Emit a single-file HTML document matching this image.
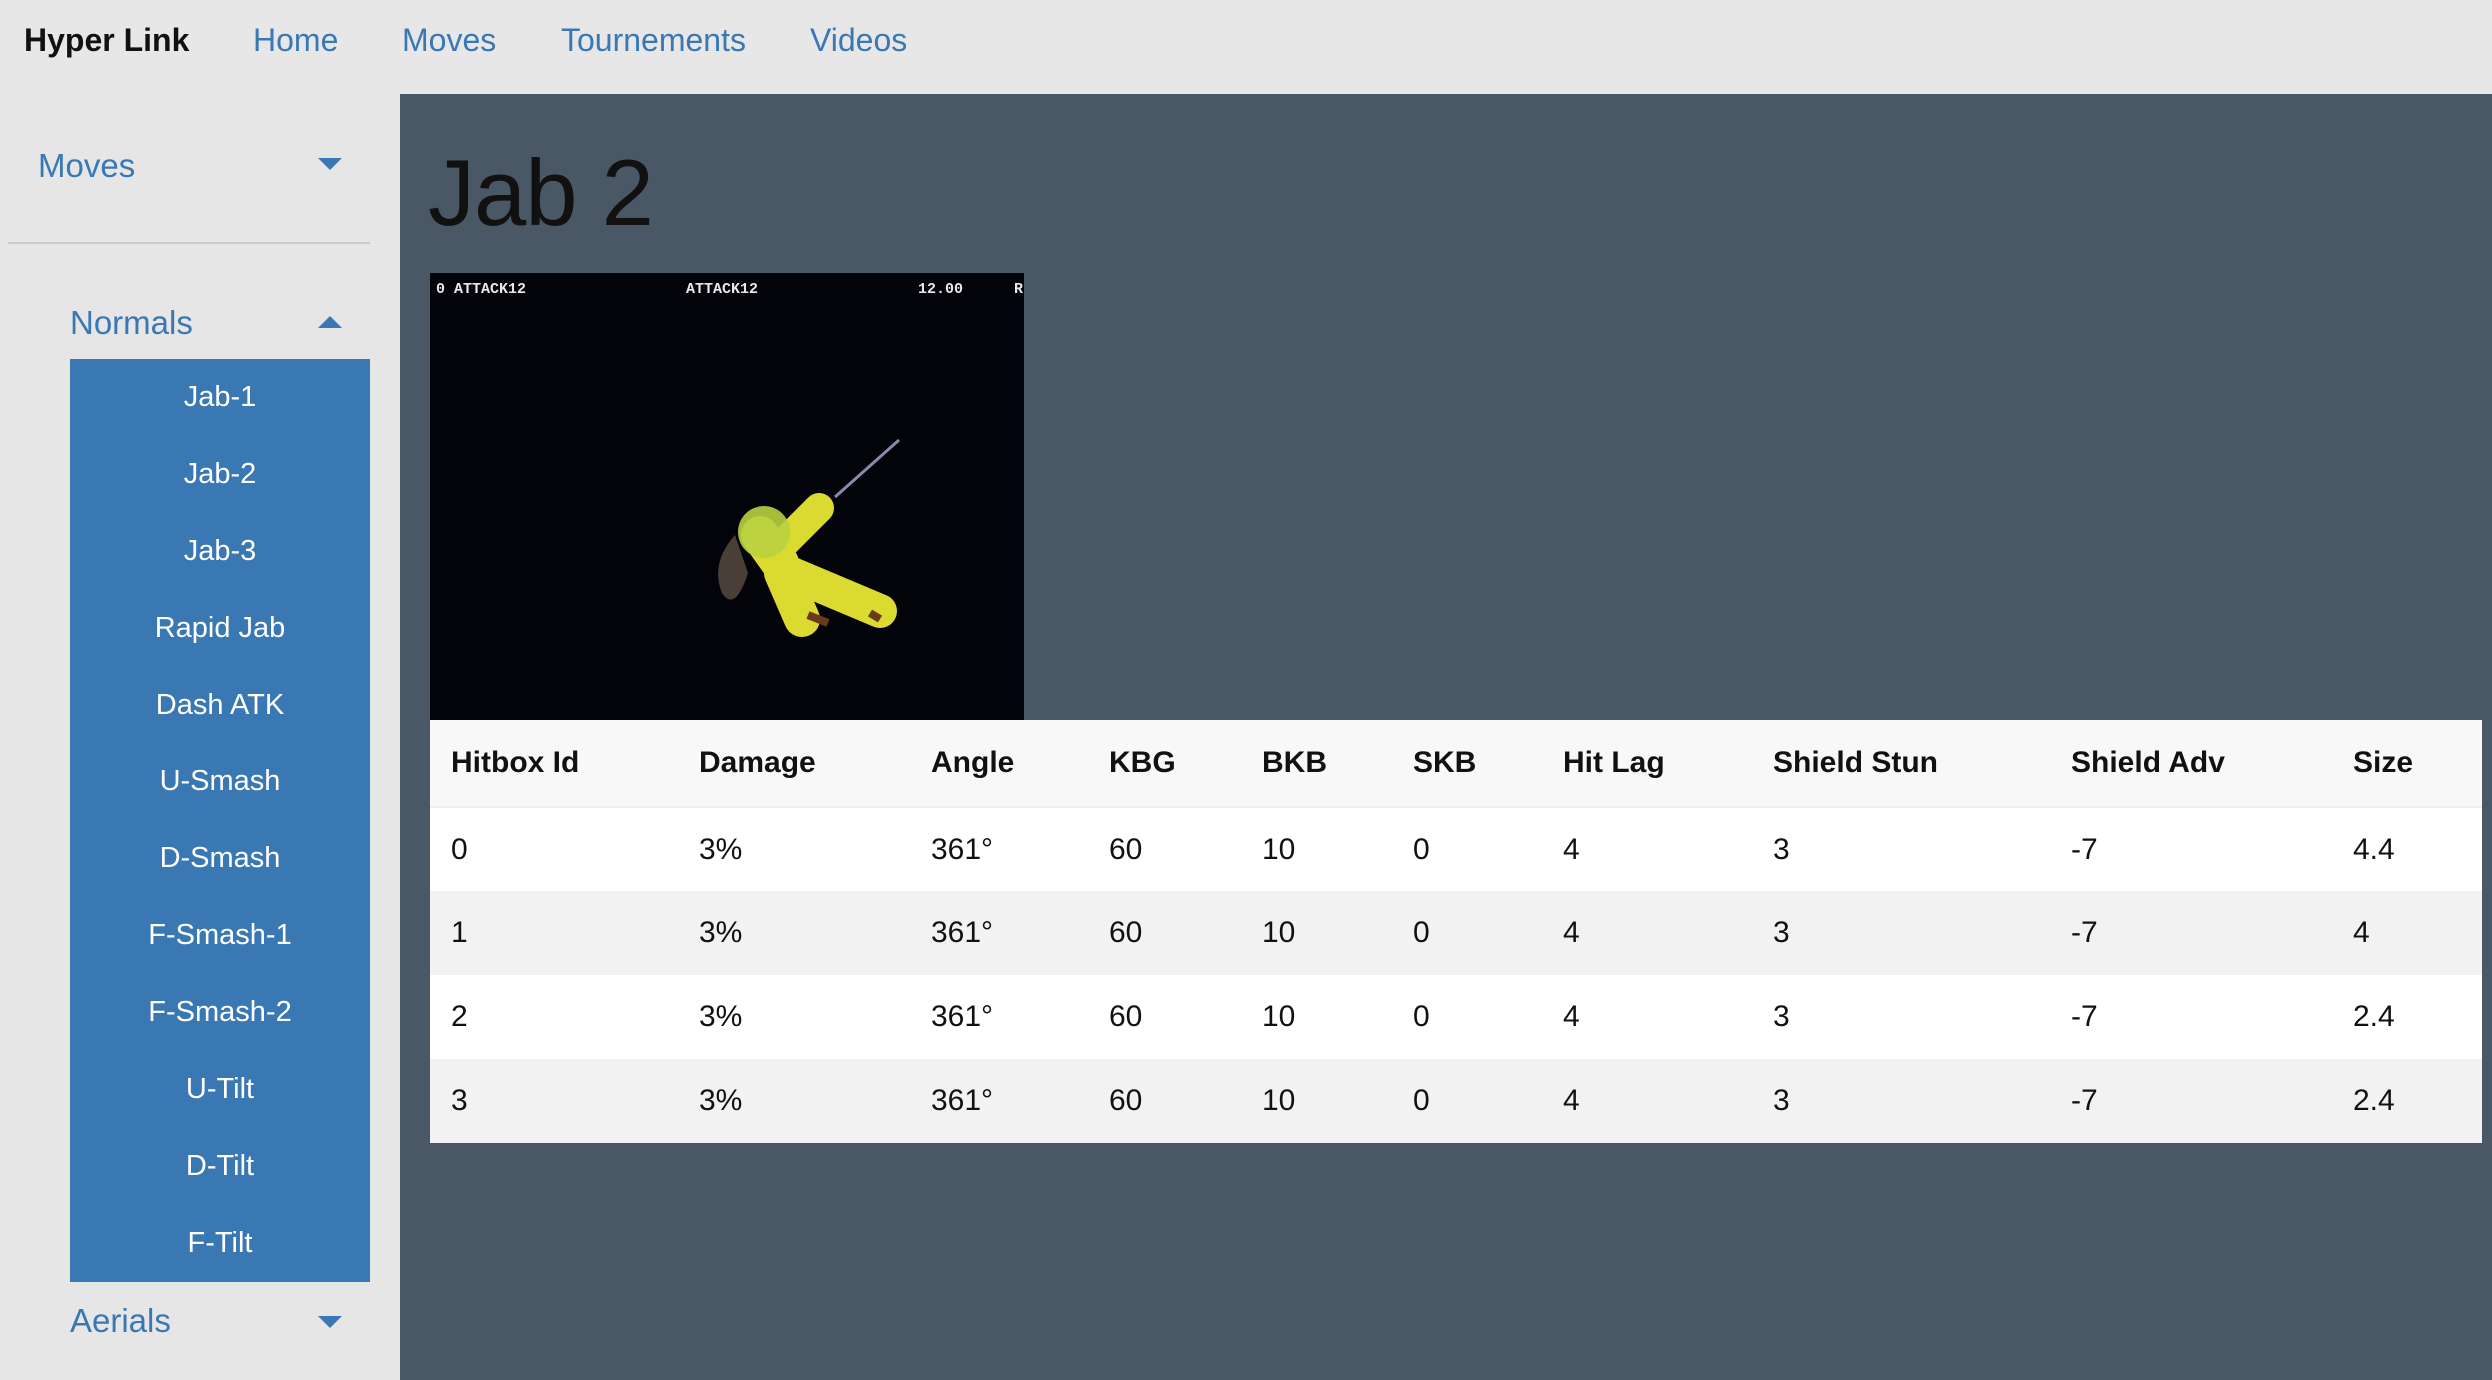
<!DOCTYPE html>
<html><head><meta charset="utf-8">
<style>
*{margin:0;padding:0;box-sizing:border-box}
html,body{width:2492px;height:1380px;overflow:hidden;background:#e6e6e6;font-family:"Liberation Sans",Helvetica,Arial,sans-serif}
.nav{position:absolute;left:0;top:0;width:2492px;height:94px;background:#e7e7e7}
.nav span{position:absolute;top:22px;font-size:32px;color:#3a78b4;white-space:nowrap}
.nav .brand{color:#111;font-weight:bold;left:24px}
.side{position:absolute;left:0;top:94px;width:400px;height:1286px;background:#e6e6e6}
.main{position:absolute;left:400px;top:94px;width:2092px;height:1286px;background:#4a5866}
.sl{position:absolute;font-size:33px;color:#3a78b4}
.caret{position:absolute;width:0;height:0;border-left:12px solid transparent;border-right:12px solid transparent}
.down{border-top:12px solid #3a78b4}
.up{border-bottom:12px solid #3a78b4}
.hr{position:absolute;left:8px;top:242px;width:362px;height:2px;background:#cbcbcb}
.list{position:absolute;left:70px;top:359px;width:300px;height:923px;background:#3a78b4}
.list div{height:76.9px;line-height:76.9px;text-align:center;color:#fff;font-size:29px}
h1{position:absolute;left:428px;top:146px;font-size:94px;font-weight:normal;color:#111;line-height:1;letter-spacing:-1px}
.img{position:absolute;left:430px;top:273px;width:594px;height:447px;background:#03030a}
table{position:absolute;left:430px;top:720px;width:2052px;border-collapse:collapse;table-layout:fixed;font-size:30px;color:#111}
th,td{text-align:left;padding:0 0 0 21px;white-space:nowrap}
th{height:87px;background:#f8f8f8;font-weight:bold;border-bottom:2px solid #efefef}
td{height:84px}
tr.a td{background:#fff}
tr.b td{background:#f2f2f2}
</style></head><body>
<div class="nav">
<span class="brand">Hyper Link</span>
<span style="left:253px">Home</span>
<span style="left:402px">Moves</span>
<span style="left:561px">Tournements</span>
<span style="left:810px">Videos</span>
</div>
<div class="side">
<div class="sl" style="left:38px;top:53px">Moves</div>
<div class="caret down" style="left:318px;top:64px"></div>
<div class="hr" style="top:148px"></div>
<div class="sl" style="left:70px;top:210px">Normals</div>
<div class="caret up" style="left:318px;top:222px"></div>
</div>
<div class="list">
<div>Jab-1</div><div>Jab-2</div><div>Jab-3</div><div>Rapid Jab</div><div>Dash ATK</div><div>U-Smash</div><div>D-Smash</div><div>F-Smash-1</div><div>F-Smash-2</div><div>U-Tilt</div><div>D-Tilt</div><div>F-Tilt</div>
</div>
<div class="sl" style="left:70px;top:1302px">Aerials</div>
<div class="caret down" style="left:318px;top:1316px"></div>
<div class="main"></div>
<h1>Jab 2</h1>
<div class="img">
<svg width="594" height="447" viewBox="0 0 594 447">
<g fill="#e8e8e8" font-family="Liberation Mono,monospace" font-size="15" font-weight="bold">
<text x="6" y="20">0 ATTACK12</text><text x="256" y="20">ATTACK12</text><text x="488" y="20">12.00</text><text x="584" y="20">R</text>
</g>
<line x1="405" y1="224" x2="469" y2="167" stroke="#8a8aa8" stroke-width="3"/>
<path d="M305 262 Q280 290 292 320 Q305 340 318 300 Z" fill="#6a5a4a" opacity=".7"/>
<g stroke="#e6e634" stroke-linecap="round" fill="none" opacity=".95">
<line x1="389" y1="235" x2="349" y2="275" stroke-width="30"/>
<line x1="330" y1="262" x2="350" y2="290" stroke-width="38"/>
<line x1="355" y1="298" x2="450" y2="338" stroke-width="34"/>
<line x1="352" y1="300" x2="372" y2="346" stroke-width="36"/>
</g>
<path d="M378 342 l20 8 M440 340 l10 6" stroke="#6a3a1a" stroke-width="8"/>
<circle cx="334" cy="259" r="26" fill="#b8d040" opacity=".9"/>
</svg>
</div>
<table>
<colgroup><col style="width:248px"><col style="width:232px"><col style="width:178px"><col style="width:153px"><col style="width:151px"><col style="width:150px"><col style="width:210px"><col style="width:298px"><col style="width:282px"><col style="width:150px"></colgroup>
<tr><th>Hitbox Id</th><th>Damage</th><th>Angle</th><th>KBG</th><th>BKB</th><th>SKB</th><th>Hit Lag</th><th>Shield Stun</th><th>Shield Adv</th><th>Size</th></tr>
<tr class="a"><td>0</td><td>3%</td><td>361°</td><td>60</td><td>10</td><td>0</td><td>4</td><td>3</td><td>-7</td><td>4.4</td></tr>
<tr class="b"><td>1</td><td>3%</td><td>361°</td><td>60</td><td>10</td><td>0</td><td>4</td><td>3</td><td>-7</td><td>4</td></tr>
<tr class="a"><td>2</td><td>3%</td><td>361°</td><td>60</td><td>10</td><td>0</td><td>4</td><td>3</td><td>-7</td><td>2.4</td></tr>
<tr class="b"><td>3</td><td>3%</td><td>361°</td><td>60</td><td>10</td><td>0</td><td>4</td><td>3</td><td>-7</td><td>2.4</td></tr>
</table>
</body></html>
